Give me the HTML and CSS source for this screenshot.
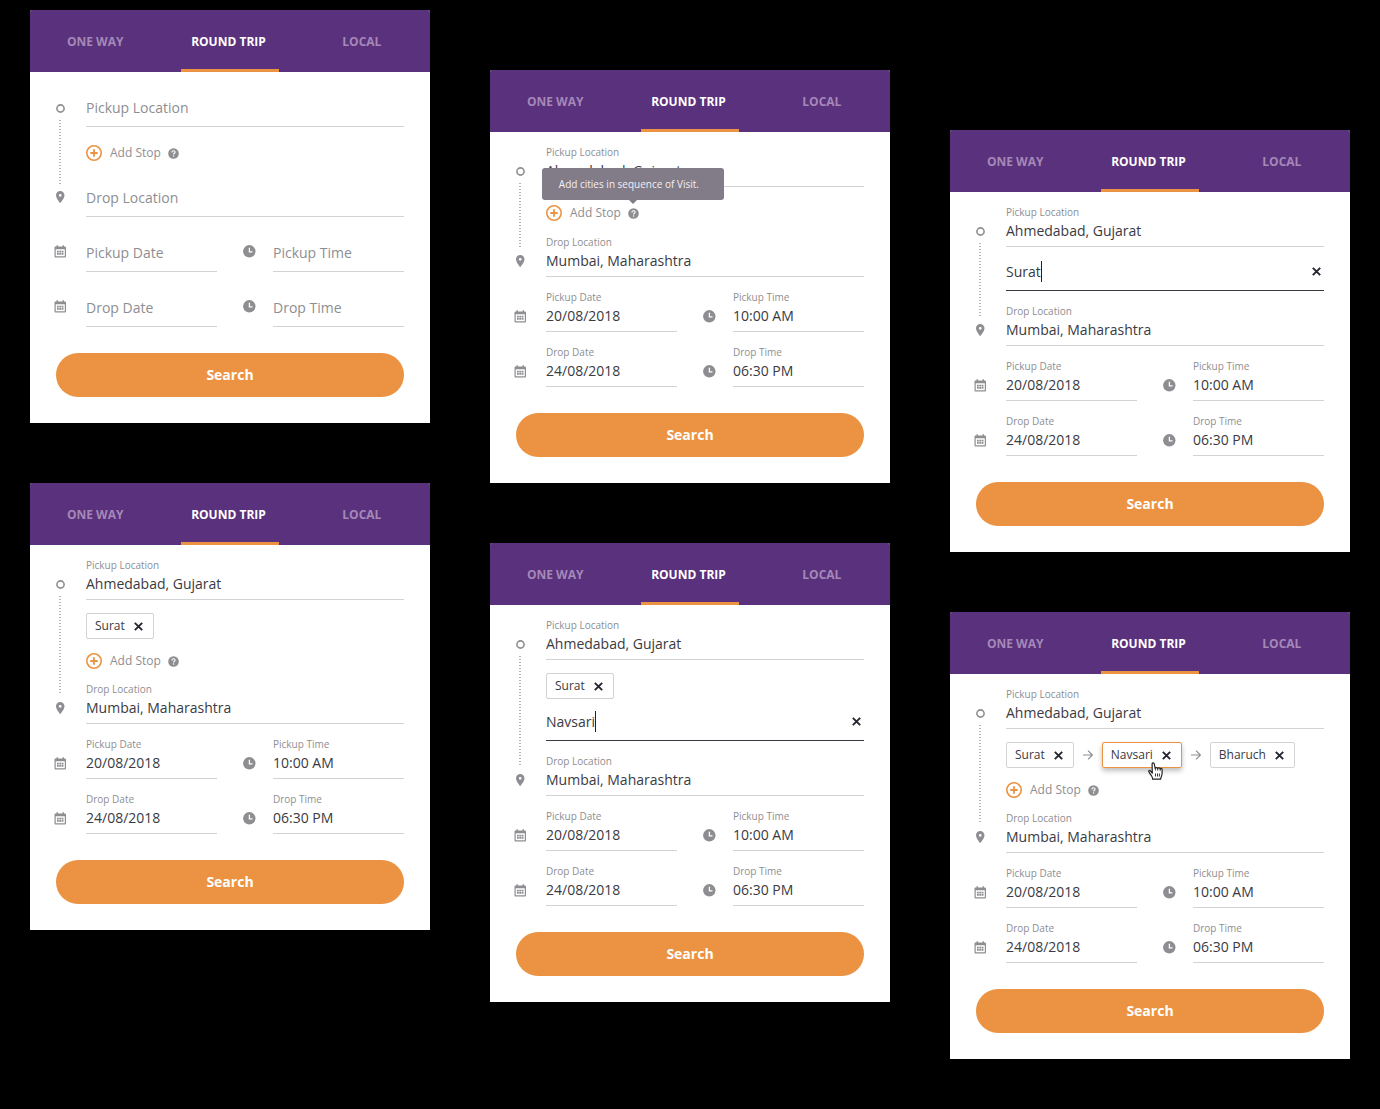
FILE: index.html
```html
<!DOCTYPE html>
<html lang="en">
<head>
<meta charset="utf-8">
<meta name="viewport" content="width=device-width, initial-scale=1">
<title>Cab booking – round trip</title>
<link rel="stylesheet" href="styles.css">
</head>
<body>
<svg class="sprite" aria-hidden="true">
  <symbol id="i-start" viewBox="0 0 9 9"><circle cx="4.5" cy="4.5" r="3.6" fill="none" stroke="currentColor" stroke-width="1.6"/></symbol>
  <symbol id="i-pin" viewBox="0 0 9 12"><path fill="currentColor" fill-rule="evenodd" d="M4.200 0A4.200 4.200 0 0 0 0 4.300C0 7.400 4.200 12.200 4.200 12.200S8.500 7.400 8.500 4.300A4.300 4.300 0 0 0 4.200 0zm0 2.900a1.400 1.400 0 1 1 0 2.800 1.400 1.400 0 0 1 0-2.800z"/></symbol>
  <symbol id="i-cal" viewBox="0 0 13 13"><path fill="currentColor" fill-rule="evenodd" d="M2.500.3h1.400v1.300h4.700V.3H10v1.300h.7c.8 0 1.300.5 1.300 1.300v8.300c0 .8-.5 1.300-1.300 1.300H1.800c-.8 0-1.300-.5-1.300-1.300V2.900c0-.8.5-1.300 1.300-1.300h.7zM1.700 4.300v7h9.100v-7z"/><path fill="currentColor" d="M3 5.800h1.800v1.700H3zm2.300 0h1.900v1.700H5.300zm2.400 0h1.800v1.700H7.700zM3 8h1.800v1.700H3zm2.300 0h1.900v1.700H5.300zm2.400 0h1.800v1.700H7.700z"/></symbol>
  <symbol id="i-clock" viewBox="0 0 13 13"><circle cx="6.300" cy="6.300" r="6.200" fill="currentColor"/><path d="M6.400 2.800v4h3.100" fill="none" stroke="#fff" stroke-width="1.300"/></symbol>
  <symbol id="i-plus" viewBox="0 0 16 16"><circle cx="8" cy="8" r="7.200" fill="none" stroke="currentColor" stroke-width="1.600"/><path d="M8 4.300v7.400M4.300 8h7.400" stroke="currentColor" stroke-width="1.800"/></symbol>
  <symbol id="i-help" viewBox="0 0 11 11"><circle cx="5.500" cy="5.500" r="5.300" fill="currentColor"/><path d="M3.900 4.400c0-1.100.7-1.600 1.600-1.600s1.600.5 1.600 1.400c0 1.100-1.500 1.100-1.500 2.300" fill="none" stroke="#fff" stroke-width="1.100"/><circle cx="5.600" cy="8" r=".7" fill="#fff"/></symbol>
  <symbol id="i-x" viewBox="0 0 9 9"><path d="M.8.8l7.400 7.400M8.200.8L.8 8.200" stroke="currentColor" stroke-width="1.900"/></symbol>
  <symbol id="i-arrow" viewBox="0 0 10 10"><path d="M0 5h9.300M5 .6L9.400 5 5 9.400" fill="none" stroke="currentColor" stroke-width="1.200"/></symbol>
</svg>

<main class="board">
  <div class="column">
    <form class="card card-empty">
      <nav class="tabs">
        <button type="button" class="tab"><span>ONE WAY</span></button>
        <button type="button" class="tab active"><span>ROUND TRIP</span></button>
        <button type="button" class="tab"><span>LOCAL</span></button>
      </nav>
      <div class="card-body">
        <div class="route">
          <div class="rail"><svg class="ic-start"><use href="#i-start"/></svg><span class="dots"></span><svg class="ic-pin"><use href="#i-pin"/></svg></div>
          <div class="stack">
            <label class="field"><input type="text" placeholder="Pickup Location" aria-label="Pickup Location"></label>
            <div class="stops stops-bare">
              <div class="add-row"><button type="button" class="add-stop"><svg class="ic-plus"><use href="#i-plus"/></svg>Add Stop</button><button type="button" class="help" aria-label="Help"><svg class="ic-help"><use href="#i-help"/></svg></button></div>
            </div>
            <label class="field"><input type="text" placeholder="Drop Location" aria-label="Drop Location"></label>
          </div>
        </div>
        <div class="schedule">
          <div class="when"><svg class="ic-cal"><use href="#i-cal"/></svg><label class="field"><input type="text" placeholder="Pickup Date" aria-label="Pickup Date"></label></div>
          <div class="when"><svg class="ic-clock"><use href="#i-clock"/></svg><label class="field"><input type="text" placeholder="Pickup Time" aria-label="Pickup Time"></label></div>
          <div class="when"><svg class="ic-cal"><use href="#i-cal"/></svg><label class="field"><input type="text" placeholder="Drop Date" aria-label="Drop Date"></label></div>
          <div class="when"><svg class="ic-clock"><use href="#i-clock"/></svg><label class="field"><input type="text" placeholder="Drop Time" aria-label="Drop Time"></label></div>
        </div>
        <button type="button" class="search">Search</button>
      </div>
    </form>

    <form class="card">
      <nav class="tabs">
        <button type="button" class="tab"><span>ONE WAY</span></button>
        <button type="button" class="tab active"><span>ROUND TRIP</span></button>
        <button type="button" class="tab"><span>LOCAL</span></button>
      </nav>
      <div class="card-body">
        <div class="route">
          <div class="rail"><svg class="ic-start"><use href="#i-start"/></svg><span class="dots"></span><svg class="ic-pin"><use href="#i-pin"/></svg></div>
          <div class="stack">
            <label class="field"><span class="caption">Pickup Location</span><input type="text" value="Ahmedabad, Gujarat"></label>
            <div class="stops">
              <div class="chips"><span class="chip">Surat<button type="button" class="remove" aria-label="Remove Surat"><svg class="ic-x"><use href="#i-x"/></svg></button></span></div>
              <div class="add-row"><button type="button" class="add-stop"><svg class="ic-plus"><use href="#i-plus"/></svg>Add Stop</button><button type="button" class="help" aria-label="Help"><svg class="ic-help"><use href="#i-help"/></svg></button></div>
            </div>
            <label class="field"><span class="caption">Drop Location</span><input type="text" value="Mumbai, Maharashtra"></label>
          </div>
        </div>
        <div class="schedule">
          <div class="when"><svg class="ic-cal"><use href="#i-cal"/></svg><label class="field"><span class="caption">Pickup Date</span><input type="text" value="20/08/2018"></label></div>
          <div class="when"><svg class="ic-clock"><use href="#i-clock"/></svg><label class="field"><span class="caption">Pickup Time</span><input type="text" value="10:00 AM"></label></div>
          <div class="when"><svg class="ic-cal"><use href="#i-cal"/></svg><label class="field"><span class="caption">Drop Date</span><input type="text" value="24/08/2018"></label></div>
          <div class="when"><svg class="ic-clock"><use href="#i-clock"/></svg><label class="field"><span class="caption">Drop Time</span><input type="text" value="06:30 PM"></label></div>
        </div>
        <button type="button" class="search">Search</button>
      </div>
    </form>
  </div>

  <div class="column column-second">
    <form class="card">
      <nav class="tabs">
        <button type="button" class="tab"><span>ONE WAY</span></button>
        <button type="button" class="tab active"><span>ROUND TRIP</span></button>
        <button type="button" class="tab"><span>LOCAL</span></button>
      </nav>
      <div class="card-body">
        <div class="route">
          <div class="rail"><svg class="ic-start"><use href="#i-start"/></svg><span class="dots"></span><svg class="ic-pin"><use href="#i-pin"/></svg></div>
          <div class="stack">
            <label class="field"><span class="caption">Pickup Location</span><input type="text" value="Ahmedabad, Gujarat"></label>
            <div class="stops stops-bare">
              <div class="add-row"><button type="button" class="add-stop"><svg class="ic-plus"><use href="#i-plus"/></svg>Add Stop</button><button type="button" class="help" aria-label="Help" aria-describedby="stop-tip"><svg class="ic-help"><use href="#i-help"/></svg><span class="tooltip" role="tooltip" id="stop-tip">Add cities in sequence of Visit.</span></button></div>
            </div>
            <label class="field"><span class="caption">Drop Location</span><input type="text" value="Mumbai, Maharashtra"></label>
          </div>
        </div>
        <div class="schedule">
          <div class="when"><svg class="ic-cal"><use href="#i-cal"/></svg><label class="field"><span class="caption">Pickup Date</span><input type="text" value="20/08/2018"></label></div>
          <div class="when"><svg class="ic-clock"><use href="#i-clock"/></svg><label class="field"><span class="caption">Pickup Time</span><input type="text" value="10:00 AM"></label></div>
          <div class="when"><svg class="ic-cal"><use href="#i-cal"/></svg><label class="field"><span class="caption">Drop Date</span><input type="text" value="24/08/2018"></label></div>
          <div class="when"><svg class="ic-clock"><use href="#i-clock"/></svg><label class="field"><span class="caption">Drop Time</span><input type="text" value="06:30 PM"></label></div>
        </div>
        <button type="button" class="search">Search</button>
      </div>
    </form>

    <form class="card">
      <nav class="tabs">
        <button type="button" class="tab"><span>ONE WAY</span></button>
        <button type="button" class="tab active"><span>ROUND TRIP</span></button>
        <button type="button" class="tab"><span>LOCAL</span></button>
      </nav>
      <div class="card-body">
        <div class="route">
          <div class="rail"><svg class="ic-start"><use href="#i-start"/></svg><span class="dots"></span><svg class="ic-pin"><use href="#i-pin"/></svg></div>
          <div class="stack">
            <label class="field"><span class="caption">Pickup Location</span><input type="text" value="Ahmedabad, Gujarat"></label>
            <div class="stops stops-editing">
              <div class="chips"><span class="chip">Surat<button type="button" class="remove" aria-label="Remove Surat"><svg class="ic-x"><use href="#i-x"/></svg></button></span></div>
              <div class="editor"><input type="text" value="Navsari" aria-label="Stop city"><span class="caret"></span><button type="button" class="remove" aria-label="Clear stop"><svg class="ic-x"><use href="#i-x"/></svg></button></div>
            </div>
            <label class="field"><span class="caption">Drop Location</span><input type="text" value="Mumbai, Maharashtra"></label>
          </div>
        </div>
        <div class="schedule">
          <div class="when"><svg class="ic-cal"><use href="#i-cal"/></svg><label class="field"><span class="caption">Pickup Date</span><input type="text" value="20/08/2018"></label></div>
          <div class="when"><svg class="ic-clock"><use href="#i-clock"/></svg><label class="field"><span class="caption">Pickup Time</span><input type="text" value="10:00 AM"></label></div>
          <div class="when"><svg class="ic-cal"><use href="#i-cal"/></svg><label class="field"><span class="caption">Drop Date</span><input type="text" value="24/08/2018"></label></div>
          <div class="when"><svg class="ic-clock"><use href="#i-clock"/></svg><label class="field"><span class="caption">Drop Time</span><input type="text" value="06:30 PM"></label></div>
        </div>
        <button type="button" class="search">Search</button>
      </div>
    </form>
  </div>

  <div class="column column-third">
    <form class="card">
      <nav class="tabs">
        <button type="button" class="tab"><span>ONE WAY</span></button>
        <button type="button" class="tab active"><span>ROUND TRIP</span></button>
        <button type="button" class="tab"><span>LOCAL</span></button>
      </nav>
      <div class="card-body">
        <div class="route">
          <div class="rail"><svg class="ic-start"><use href="#i-start"/></svg><span class="dots"></span><svg class="ic-pin"><use href="#i-pin"/></svg></div>
          <div class="stack">
            <label class="field"><span class="caption">Pickup Location</span><input type="text" value="Ahmedabad, Gujarat"></label>
            <div class="stops stops-editing">
              <div class="editor"><input type="text" value="Surat" aria-label="Stop city"><span class="caret"></span><button type="button" class="remove" aria-label="Clear stop"><svg class="ic-x"><use href="#i-x"/></svg></button></div>
            </div>
            <label class="field"><span class="caption">Drop Location</span><input type="text" value="Mumbai, Maharashtra"></label>
          </div>
        </div>
        <div class="schedule">
          <div class="when"><svg class="ic-cal"><use href="#i-cal"/></svg><label class="field"><span class="caption">Pickup Date</span><input type="text" value="20/08/2018"></label></div>
          <div class="when"><svg class="ic-clock"><use href="#i-clock"/></svg><label class="field"><span class="caption">Pickup Time</span><input type="text" value="10:00 AM"></label></div>
          <div class="when"><svg class="ic-cal"><use href="#i-cal"/></svg><label class="field"><span class="caption">Drop Date</span><input type="text" value="24/08/2018"></label></div>
          <div class="when"><svg class="ic-clock"><use href="#i-clock"/></svg><label class="field"><span class="caption">Drop Time</span><input type="text" value="06:30 PM"></label></div>
        </div>
        <button type="button" class="search">Search</button>
      </div>
    </form>

    <form class="card">
      <nav class="tabs">
        <button type="button" class="tab"><span>ONE WAY</span></button>
        <button type="button" class="tab active"><span>ROUND TRIP</span></button>
        <button type="button" class="tab"><span>LOCAL</span></button>
      </nav>
      <div class="card-body">
        <div class="route">
          <div class="rail"><svg class="ic-start"><use href="#i-start"/></svg><span class="dots"></span><svg class="ic-pin"><use href="#i-pin"/></svg></div>
          <div class="stack">
            <label class="field"><span class="caption">Pickup Location</span><input type="text" value="Ahmedabad, Gujarat"></label>
            <div class="stops">
              <div class="chips">
                <span class="chip">Surat<button type="button" class="remove" aria-label="Remove Surat"><svg class="ic-x"><use href="#i-x"/></svg></button></span>
                <svg class="ic-arrow"><use href="#i-arrow"/></svg>
                <span class="chip chip-hover">Navsari<button type="button" class="remove" aria-label="Remove Navsari"><svg class="ic-x"><use href="#i-x"/></svg></button>
                  <svg class="pointer" viewBox="0 0 15 18" aria-hidden="true"><path d="M4.300 11.200L2.300 8.900C1.500 8 .5 8.700.9 9.700c.5 1.200 1.700 2.800 2.600 4.100.6.900 1.100 1.500 1.100 3.400h8c0-1.800 1.500-3.100 1.500-6V7.300c0-1.300-1.700-1.300-1.900-.2 0-1.600-2.300-1.700-2.500-.4C9.500 5.300 7.400 5.200 7.200 6.500L6.300 2C6 .3 3.800.6 4.100 2.300z" fill="#fff" stroke="#222" stroke-width="1.200" stroke-linejoin="round"/><path d="M7.200 6.500l.3 2M9.700 6.700v1.900M12.200 7.100v1.800M7.500 11.500v3M9.500 11.500v3M11.400 11.500v3" fill="none" stroke="#222" stroke-width=".9"/></svg>
                </span>
                <svg class="ic-arrow"><use href="#i-arrow"/></svg>
                <span class="chip">Bharuch<button type="button" class="remove" aria-label="Remove Bharuch"><svg class="ic-x"><use href="#i-x"/></svg></button></span>
              </div>
              <div class="add-row"><button type="button" class="add-stop"><svg class="ic-plus"><use href="#i-plus"/></svg>Add Stop</button><button type="button" class="help" aria-label="Help"><svg class="ic-help"><use href="#i-help"/></svg></button></div>
            </div>
            <label class="field"><span class="caption">Drop Location</span><input type="text" value="Mumbai, Maharashtra"></label>
          </div>
        </div>
        <div class="schedule">
          <div class="when"><svg class="ic-cal"><use href="#i-cal"/></svg><label class="field"><span class="caption">Pickup Date</span><input type="text" value="20/08/2018"></label></div>
          <div class="when"><svg class="ic-clock"><use href="#i-clock"/></svg><label class="field"><span class="caption">Pickup Time</span><input type="text" value="10:00 AM"></label></div>
          <div class="when"><svg class="ic-cal"><use href="#i-cal"/></svg><label class="field"><span class="caption">Drop Date</span><input type="text" value="24/08/2018"></label></div>
          <div class="when"><svg class="ic-clock"><use href="#i-clock"/></svg><label class="field"><span class="caption">Drop Time</span><input type="text" value="06:30 PM"></label></div>
        </div>
        <button type="button" class="search">Search</button>
      </div>
    </form>
  </div>
</main>
</body>
</html>
```
FILE: styles.css
```css
:root {
  --purple: #59317c;
  --orange: #eb9342;
  --ink: #3a3a42;
  --grey: #8e8e92;
  --line: #d3d3d5;
}

* { box-sizing: border-box; }

body {
  margin: 0;
  background: #000;
  color: var(--ink);
  font-family: "Open Sans", "Noto Sans", sans-serif;
}

button, input {
  margin: 0;
  padding: 0;
  border: 0;
  background: none;
  color: inherit;
  font: inherit;
}

input { outline: 0; border-radius: 0; }
button { cursor: pointer; }
svg { display: block; flex: none; }
.sprite { position: absolute; width: 0; height: 0; }

.board {
  display: grid;
  grid-template-columns: repeat(3, minmax(0, 1fr));
  gap: 60px;
  padding: 10px 30px 50px;
}

.column {
  display: flex;
  flex-direction: column;
  gap: 60px;
}
.column-second { padding-top: 60px; }
.column-third { padding-top: 120px; }

.card { background: #fff; border-radius: 2px 2px 0 0; }

/* Tabs */
.tabs {
  display: flex;
  height: 62px;
  background: var(--purple);
  border-radius: 2px 2px 0 0;
}
.tab {
  display: flex;
  flex: 1;
  justify-content: center;
  color: #a588b8;
  font-size: 12px;
  font-weight: 700;
}
.tab span {
  display: flex;
  align-items: center;
  height: 62px;
  padding: 3px 13px 0 10px;
  border-bottom: 3px solid transparent;
}
.tab.active { color: #fff; }
.tab.active span { border-color: var(--orange); }

.card-body { padding: 0 26px 26px; }

/* Pickup, stops and drop with the dotted rail */
.route {
  display: grid;
  grid-template-columns: 30px minmax(0, 1fr);
}
.rail {
  display: flex;
  flex-direction: column;
  gap: 7px;
  padding: 35px 0 10px;
  color: var(--grey);
}
.dots {
  flex: 1;
  width: 2px;
  margin-left: 3px;
  background: repeating-linear-gradient(#b4b4b8 0 1px, transparent 1px 3px);
}
.ic-start { width: 9px; height: 9px; }
.ic-pin { width: 9px; height: 12px; }
.ic-cal, .ic-clock { width: 13px; height: 13px; color: var(--grey); }
.ic-plus { width: 16px; height: 16px; color: var(--orange); }
.ic-help { width: 11px; height: 11px; }
.ic-x { width: 9px; height: 9px; }
.ic-arrow { width: 10px; height: 10px; color: var(--grey); }

.field {
  display: flex;
  flex-direction: column;
  height: 55px;
  padding-top: 12px;
  border-bottom: 1px solid var(--line);
}
.field input {
  width: 100%;
  height: 21px;
  font-size: 14px;
  line-height: 21px;
}
.field input::placeholder { color: var(--grey); opacity: 1; }
.caption {
  color: var(--grey);
  font-size: 10px;
  line-height: 16px;
}

.card-empty .field { padding-top: 25px; }
.card-empty .rail { padding: 32px 0 14px; }

/* Stops */
.stops {
  display: flex;
  flex-direction: column;
  gap: 14px;
  padding-top: 13px;
}
.stops-bare { padding: 18px 0 1px; }
.stops-editing { gap: 11px; }

.chips { display: flex; align-items: center; gap: 9px; }
.chip {
  position: relative;
  display: flex;
  align-items: center;
  gap: 9px;
  height: 26px;
  padding: 0 10px 0 8px;
  border: 1px solid var(--line);
  border-radius: 2px;
  font-size: 12px;
  line-height: 16px;
}
.chip-hover {
  border-color: var(--orange);
  box-shadow: 0 3px 5px rgba(0, 0, 0, .25);
}
.pointer {
  position: absolute;
  top: 19px;
  left: 45px;
  width: 15px;
  height: 18px;
}
.remove { color: #25252f; }

.add-row {
  display: flex;
  align-items: center;
  gap: 7px;
  height: 16px;
  color: var(--grey);
}
.add-stop {
  display: flex;
  align-items: center;
  gap: 8px;
  font-size: 12px;
  line-height: 16px;
}
.help { position: relative; padding-top: 1px; }

.tooltip {
  position: absolute;
  bottom: 19px;
  left: -86px;
  padding: 8px 25px 8px 17px;
  border-radius: 3px;
  background: #827b88;
  color: #f2f0f4;
  font-size: 10px;
  line-height: 16px;
  white-space: nowrap;
}
.tooltip::after {
  content: "";
  position: absolute;
  top: 100%;
  left: 87px;
  border: 4px solid transparent;
  border-top-color: #827b88;
  border-bottom: 0;
}

.editor {
  display: flex;
  align-items: center;
  height: 31px;
  padding: 0 3px 8px 0;
  border-bottom: 1px solid var(--ink);
}
.editor input {
  field-sizing: content;
  height: 21px;
  font-size: 14px;
  line-height: 21px;
}
.caret { width: 1px; height: 21px; background: #222; }
.editor .remove { margin-left: auto; }

/* Dates and times */
.schedule {
  display: grid;
  grid-template-columns: repeat(2, minmax(0, 1fr));
  column-gap: 26px;
}
.when {
  display: grid;
  grid-template-columns: 30px minmax(0, 1fr);
}
.when svg { margin-top: 33px; }
.when .ic-cal { margin-left: -2px; }
.card-empty .when svg { margin-top: 28px; }

.search {
  width: 100%;
  height: 44px;
  margin-top: 26px;
  padding-bottom: 2px;
  border-radius: 22px;
  background: var(--orange);
  color: #fff;
  font-size: 14px;
  font-weight: 700;
}
```
